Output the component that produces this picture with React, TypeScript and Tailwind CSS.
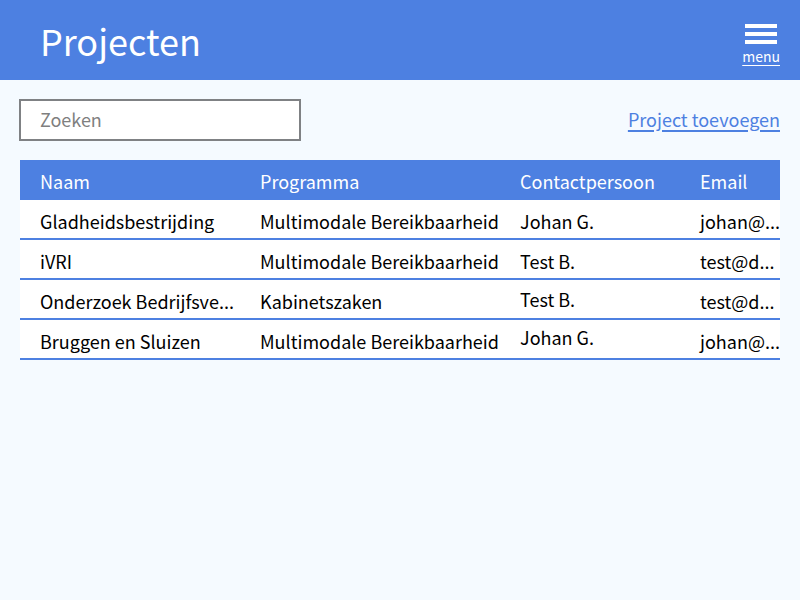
type Project = {
  name: string;
  programme: string;
  contact: string;
  contactClass: string;
  email: string;
};

const projects: Project[] = [
  { name: "Gladheidsbestrijding", programme: "Multimodale Bereikbaarheid", contact: "Johan G.", contactClass: "pt-1", email: "johan@..." },
  { name: "iVRI", programme: "Multimodale Bereikbaarheid", contact: "Test B.", contactClass: "pt-1", email: "test@d..." },
  { name: "Onderzoek Bedrijfsve...", programme: "Kabinetszaken", contact: "Test B.", contactClass: "pt-0", email: "test@d..." },
  { name: "Bruggen en Sluizen", programme: "Multimodale Bereikbaarheid", contact: "Johan G.", contactClass: "pb-1", email: "johan@..." },
];

export default function App() {
  return (
    <div className="min-h-screen bg-[#f5faff] font-['Noto_Sans_CJK_SC',sans-serif] text-[18px] leading-6 text-black">
      <header className="flex h-20 items-center justify-between bg-[#4d80e1] pr-5 pl-10 text-white">
        <h1 className="text-4xl leading-[60px]">Projecten</h1>
        <button type="button" className="flex flex-col items-center pt-3">
          <svg className="h-5 w-8" viewBox="0 0 32 20" fill="currentColor" aria-hidden="true">
            <rect width="32" height="4" />
            <rect y="8" width="32" height="4" />
            <rect y="16" width="32" height="4" />
          </svg>
          <span className="text-sm leading-6 underline decoration-1 underline-offset-3">menu</span>
        </button>
      </header>

      <main className="px-5">
        <div className="flex h-20 items-center justify-between">
          <input
            type="search"
            aria-label="Zoeken"
            placeholder="Zoeken"
            className="-ml-px h-[42px] w-[282px] border-2 border-[#7f8184] bg-white px-[19px] pb-0.5 placeholder:text-[#7f7f7f]"
          />
          <a href="#toevoegen" className="pb-0.5 text-[#4d80e1] underline decoration-2 underline-offset-3">
            Project toevoegen
          </a>
        </div>

        <table className="w-full table-fixed border-separate border-spacing-0 bg-white text-left whitespace-nowrap">
          <colgroup>
            <col className="w-60" />
            <col className="w-65" />
            <col className="w-45" />
            <col />
          </colgroup>
          <thead>
            <tr className="h-10 bg-[#4d80e1] text-white">
              <th className="p-0 pt-0.5 pl-5 font-normal">Naam</th>
              <th className="p-0 pt-0.5 font-normal">Programma</th>
              <th className="p-0 pt-0.5 font-normal">Contactpersoon</th>
              <th className="p-0 pt-0.5 font-normal">Email</th>
            </tr>
          </thead>
          <tbody>
            {projects.map((project) => (
              <tr key={project.name} className="h-10">
                <td className="border-b-2 border-[#4d80e1] p-0 pt-1 pl-5">{project.name}</td>
                <td className="border-b-2 border-[#4d80e1] p-0 pt-1">{project.programme}</td>
                <td className={`border-b-2 border-[#4d80e1] p-0 ${project.contactClass}`}>{project.contact}</td>
                <td className="border-b-2 border-[#4d80e1] p-0 pt-1">{project.email}</td>
              </tr>
            ))}
          </tbody>
        </table>
      </main>
    </div>
  );
}
